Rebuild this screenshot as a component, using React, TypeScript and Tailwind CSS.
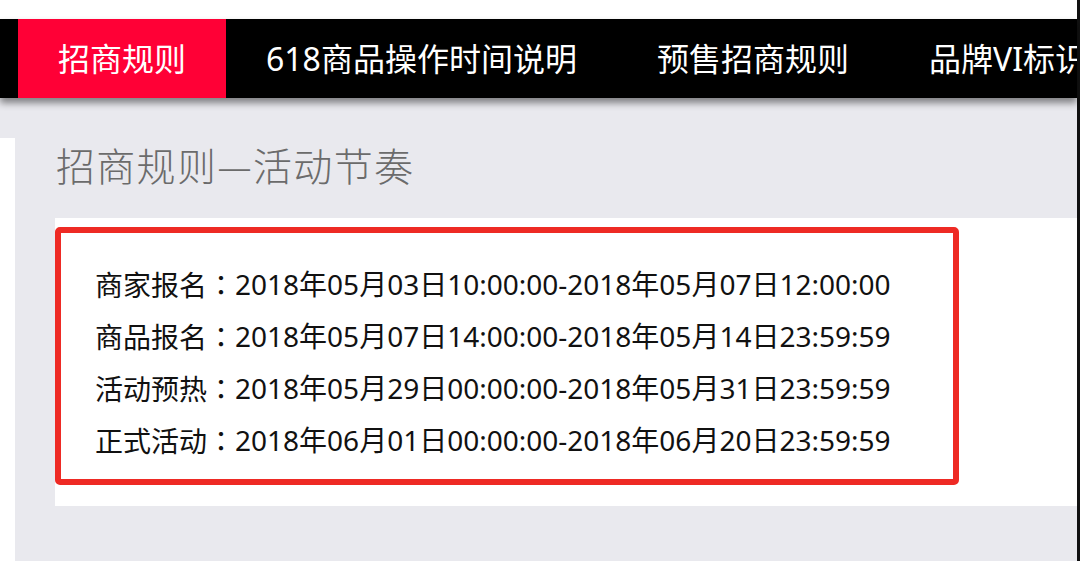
import React from "react";

const font = { fontFamily: '"Noto Sans", "Noto Sans CJK SC", sans-serif' };

const navItems = ["招商规则", "618商品操作时间说明", "预售招商规则", "品牌VI标识"];

const rows = [
  ["商家报名", "2018年05月03日10:00:00-2018年05月07日12:00:00"],
  ["商品报名", "2018年05月07日14:00:00-2018年05月14日23:59:59"],
  ["活动预热", "2018年05月29日00:00:00-2018年05月31日23:59:59"],
  ["正式活动", "2018年06月01日00:00:00-2018年06月20日23:59:59"],
];

export default function App() {
  return (
    <div className="w-[1080px] h-[561px] overflow-hidden flex bg-white" style={font}>
      <div className="w-[1077px] h-full flex flex-col">
        <div className="h-[19px] bg-white shrink-0" />
        <div className="h-[79px] shrink-0 bg-black flex pl-[18px] relative z-10 shadow-[0_5px_7px_rgba(0,0,0,0.45)] overflow-hidden">
          {navItems.map((t, i) => (
            <div
              key={t}
              className={`h-full px-[40px] flex items-center text-[32px] text-white whitespace-nowrap ${i === 0 ? "bg-[#ff0036]" : ""}`}
            >
              {t}
            </div>
          ))}
        </div>
        <div className="flex-1 flex bg-[#e9e9ee]">
          <div className="w-[15px] shrink-0 flex flex-col">
            <div className="h-[40px] shrink-0" />
            <div className="flex-1 bg-white" />
          </div>
          <div className="flex-1 pl-[40px] pt-[41px]">
            <div
              className="text-[39px] leading-[50px] text-[#6b6b6b] font-light pl-[1px] tracking-[1.3px] whitespace-nowrap"
              style={{ fontFamily: '"Noto Sans CJK SC", sans-serif' }}
            >
              招商规则—活动节奏
            </div>
            <div className="mt-[29px] bg-white pt-[9px] pb-[21px]">
              <div className="w-[904px] h-[258px] border-[6px] border-[#ee2a24] rounded-[5px] pl-[34px] pt-[25px]">
                {rows.map(([k, v]) => (
                  <div key={k} className="h-[52px] flex items-center text-[28px] text-[#111] whitespace-nowrap">
                    <span style={{ fontFamily: '"Noto Sans CJK SC", sans-serif' }}>{k}</span>
                    <span style={{ fontFamily: '"Noto Sans CJK TC", sans-serif' }}>：</span>
                    <span>{v}</span>
                  </div>
                ))}
              </div>
            </div>
          </div>
        </div>
      </div>
      <div className="w-[3px] h-full bg-[#111]" />
    </div>
  );
}
